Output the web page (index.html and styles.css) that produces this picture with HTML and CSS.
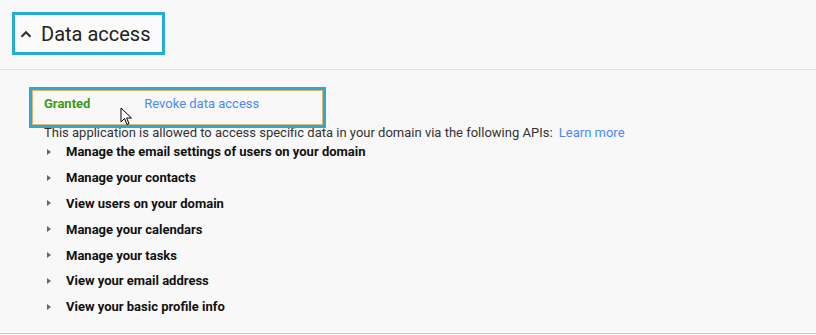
FILE: index.html
```html
<!DOCTYPE html>
<html lang="en">
<head>
    <meta charset="UTF-8">
    <title>Data access</title>
    <link rel="stylesheet" href="styles.css">
</head>
<body>
    <div class="section">
        <div class="section-header">
            <div class="title-box">
                <svg class="chevron" width="12" height="8" viewBox="0 0 12 8">
                    <path d="M1.5 6.8 L6 2.2 L10.5 6.8" fill="none" stroke="#333" stroke-width="2.2"/>
                </svg>
                <span class="title">Data access</span>
            </div>
        </div>
        <div class="section-body">
            <div class="status-box">
                <span class="status-granted">Granted</span>
                <a class="link revoke" href="#">Revoke data access</a>
                <svg class="cursor" width="13" height="19" viewBox="0 0 13 19">
                    <path d="M1 1 L1 15 L4.5 11.5 L7 17.5 L9 16.6 L6.6 11 L11.5 11 Z" fill="#fff" stroke="#000" stroke-width="1"/>
                </svg>
            </div>
            <div class="intro">This application is allowed to access specific data in your domain via the following APIs: <a class="link learn-more" href="#">Learn more</a></div>
            <ul class="api-list">
                <li class="api-item"><span class="arrow"></span>Manage the email settings of users on your domain</li>
                <li class="api-item"><span class="arrow"></span>Manage your contacts</li>
                <li class="api-item"><span class="arrow"></span>View users on your domain</li>
                <li class="api-item"><span class="arrow"></span>Manage your calendars</li>
                <li class="api-item"><span class="arrow"></span>Manage your tasks</li>
                <li class="api-item"><span class="arrow"></span>View your email address</li>
                <li class="api-item"><span class="arrow"></span>View your basic profile info</li>
            </ul>
        </div>
    </div>
</body>
</html>
```

FILE: styles.css
```css
body {
    margin: 0;
    background: #f8f8f8;
    font-family: Roboto, "Liberation Sans", sans-serif;
    font-size: 13px;
    color: #333;
}
.section {
    border-bottom: 1px solid #cacaca;
    height: 334px;
    box-sizing: border-box;
}
.section-header {
    height: 70px;
    border-bottom: 1px solid #e0e0e0;
    padding: 12px 0 0 12px;
    box-sizing: border-box;
}
.title-box {
    display: inline-flex;
    align-items: center;
    width: 153px;
    height: 43px;
    box-sizing: border-box;
    border: 3px solid #27aad6;
    background: #fbfbfb;
    padding-left: 5px;
}
.chevron {
    margin-right: 9px;
}
.title {
    font-size: 20px;
    color: #222;
}
.section-body {
    padding: 17px 0 0 44px;
}
.status-box {
    position: relative;
    margin-left: -15px;
    width: 297px;
    height: 41px;
    box-sizing: border-box;
    border: 3px solid #27aad6;
    box-shadow: inset 0 0 0 1px #e4b36c;
    padding: 5px 0 0 12px;
    line-height: 17px;
}
.status-granted {
    display: inline-block;
    width: 97px;
    color: #3f9a12;
    font-weight: bold;
}
.link {
    color: #4a8af4;
    text-decoration: none;
}
.learn-more {
    margin-left: 3px;
}
.cursor {
    position: absolute;
    left: 88px;
    top: 17px;
}
.intro {
    margin-top: -3px;
    line-height: 16px;
}
.api-list {
    list-style: none;
    margin: -2px 0 0 0;
    padding: 0;
}
.api-item {
    display: flex;
    align-items: center;
    height: 25.8px;
    font-weight: bold;
    color: #111;
}
.arrow {
    width: 0;
    height: 0;
    margin: 0 15px 0 3px;
    border-top: 3.5px solid transparent;
    border-bottom: 3.5px solid transparent;
    border-left: 4px solid #666;
}
```
